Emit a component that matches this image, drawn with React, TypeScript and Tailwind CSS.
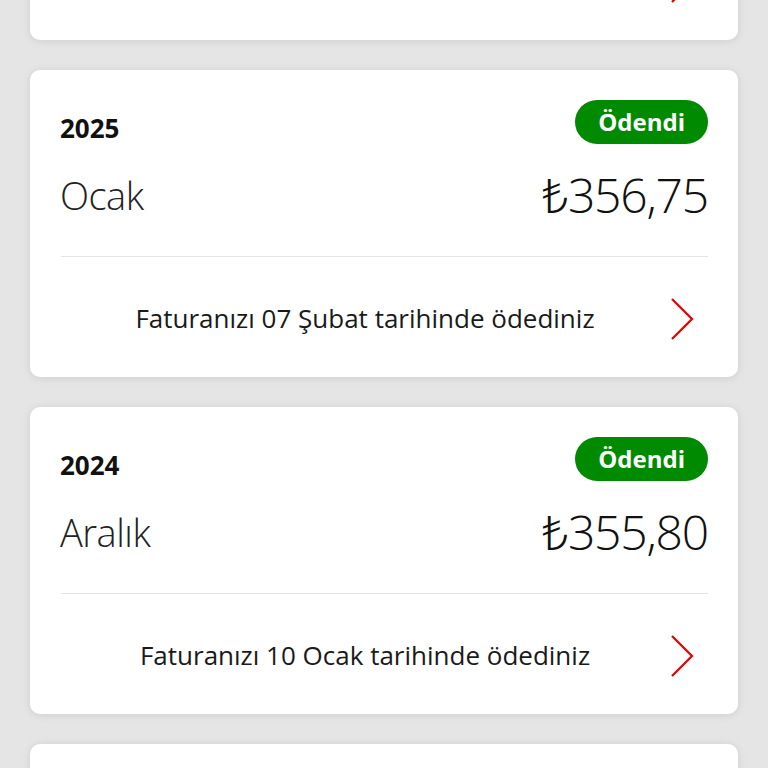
import React from "react";

type Bill = { year: string; month: string; amount: string; note: string };

const bills: Bill[] = [
  { year: "2025", month: "Şubat", amount: "356,75", note: "Faturanızı 07 Mart tarihinde ödediniz" },
  { year: "2025", month: "Ocak", amount: "356,75", note: "Faturanızı 07 Şubat tarihinde ödediniz" },
  { year: "2024", month: "Aralık", amount: "355,80", note: "Faturanızı 10 Ocak tarihinde ödediniz" },
  { year: "2024", month: "Kasım", amount: "355,80", note: "Faturanızı 10 Aralık tarihinde ödediniz" },
];

function Chevron() {
  return (
    <svg width="24" height="42" viewBox="0 0 24 42" fill="none" className="shrink-0">
      <path d="M2 1 L22 21 L2 41" stroke="#e60000" strokeWidth="2.2" strokeLinejoin="miter" />
    </svg>
  );
}

function Card({ b }: { b: Bill }) {
  return (
    <div className="bg-white rounded-[10px] shadow-[0_1px_8px_rgba(0,0,0,0.10)] px-[30px] pt-[30px] h-[307px] flex flex-col">
      <div className="flex justify-between items-end h-[44px]">
        <span className="text-[26px] leading-[28px] font-bold text-[#111] mb-[2px]">{b.year}</span>
        <span className="h-[44px] px-[23px] rounded-full bg-[#008a00] text-white text-[24px] font-bold flex items-center">
          Ödendi
        </span>
      </div>
      <div className="flex justify-between items-center h-[60px] mt-[21px]">
        <span className="text-[38px] font-light text-[#222] tracking-[-0.5px]">{b.month}</span>
        <span className="text-[48px] font-light text-[#111] tracking-[-1.2px]">₺{b.amount}</span>
      </div>
      <div className="h-[1px] bg-[#e3e3e3] mt-[31px] ml-[1px]" />
      <div className="flex items-center flex-1 pr-[14px] pt-[3px]">
        <span className="flex-1 text-center text-[26px] text-[#1a1a1a]">{b.note}</span>
        <Chevron />
      </div>
    </div>
  );
}

export default function App() {
  return (
    <div
      className="min-h-[768px] h-[768px] overflow-hidden bg-[#e5e5e5] px-[30px]"
      style={{ fontFamily: '"Open Sans", "Noto Sans", sans-serif' }}
    >
      <div className="flex flex-col gap-[30px] mt-[-267px]">
        {bills.map((b, i) => (
          <Card key={i} b={b} />
        ))}
      </div>
    </div>
  );
}
